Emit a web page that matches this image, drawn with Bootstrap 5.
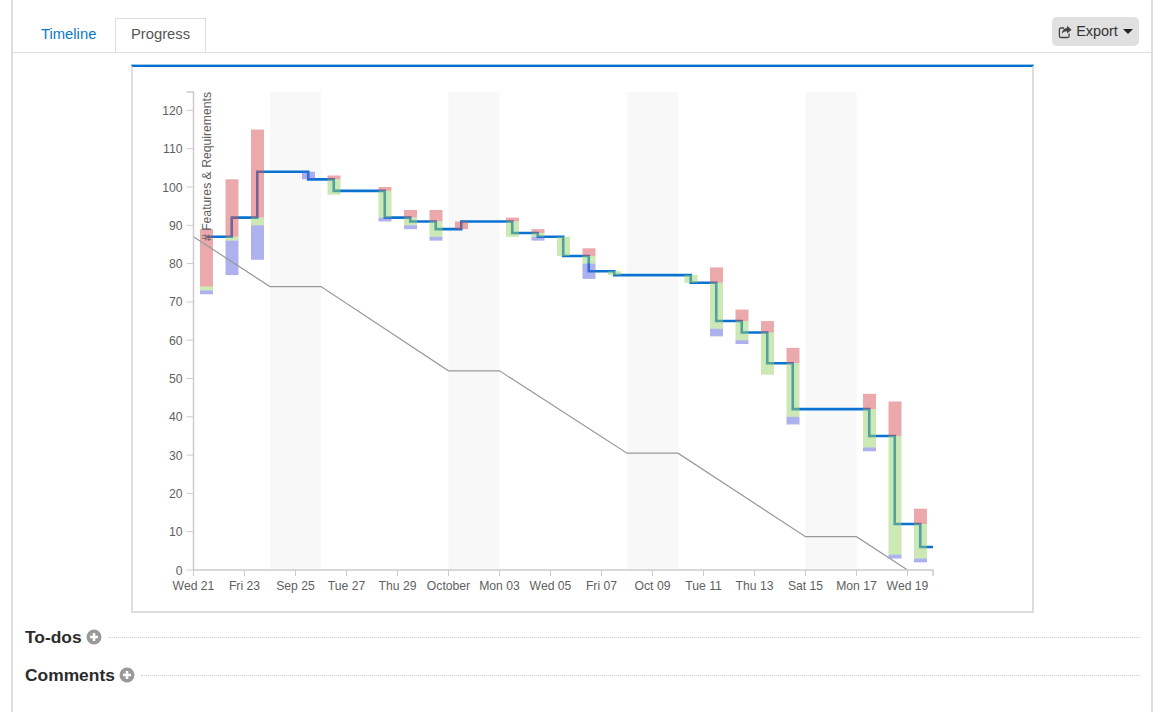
<!DOCTYPE html>
<html lang="en">
<head>
  <meta charset="UTF-8">
  <meta name="viewport" content="width=device-width, initial-scale=1">
  <title>Progress</title>
  <link href="https://cdn.jsdelivr.net/npm/bootstrap@5.3.0/dist/css/bootstrap.min.css" rel="stylesheet">
  <style>
    html, body { height: 100%; }
    body { font-family: "Liberation Sans", Arial, sans-serif; color: #333; background: #fff; overflow: hidden; }
    .panel-wrap { margin: 0 11px 0 11px; min-height: 100%; border-left: 2px solid #ddd; border-right: 2px solid #ddd; }
    .tab-head { padding-top: 18px; border-bottom: 1px solid #ddd; height: 53px; }
    .tab-head .nav-tabs { border-bottom: 0; padding-left: 12px; gap: 3px; }
    .tab-head .nav-link { font-size: 14.8px; line-height: 20px; padding: 5px 14.5px 7px 15px; height: 34px; color: #0a78c8; border-radius: 0; }
    .tab-head .nav-link.active { color: #555; border-color: #ddd #ddd #fff; border-width: 1.5px 1.5px 1px; margin-bottom: -1px; }
    .export-btn { margin: -1px 12px 0 0; width: 87px; height: 29px; padding: 0; font-size: 14.4px; color: #333; background: #e0e0e0; border: 0; border-radius: 5px; display: flex; align-items: center; justify-content: center; gap: 4px; }
    .export-btn .down-caret { width: 0; height: 0; border-left: 5px solid transparent; border-right: 5px solid transparent; border-top: 5px solid #222; margin-left: 1px; }
    .chart-frame { width: 903px; height: 548px; margin: 12px 0 0 118px; border: 2px solid #ddd; border-top-color: #0070d0; box-shadow: 0 -1px 0 rgba(0, 112, 208, .4); }
    .chart-frame svg { display: block; }
    .chart-frame text { font-family: "Liberation Sans", Arial, sans-serif; font-size: 12.2px; fill: #5f5f5f; }
    .sect-row { padding: 0 12px 0 12px; height: 38px; }
    .sect-title { font-size: 17.4px; font-weight: 700; color: #2b2b2b; margin: 0; line-height: 24px; }
    .sect-rule { border-top: 1px dotted #ccc; margin-left: 6px; }
    .first-sect { margin-top: 5px; }
  </style>
</head>
<body>
  <div class="panel-wrap">
    <div class="tab-head d-flex justify-content-between align-items-start">
      <ul class="nav nav-tabs">
        <li class="nav-item"><a class="nav-link" href="#">Timeline</a></li>
        <li class="nav-item"><a class="nav-link active" href="#">Progress</a></li>
      </ul>
      <button class="export-btn" type="button">
        <svg width="14" height="14" viewBox="0 0 14 14" aria-hidden="true">
          <path d="M6 3H3a1.6 1.6 0 0 0-1.6 1.6v6.3A1.6 1.6 0 0 0 3 12.500h6.500a1.600 1.600 0 0 0 1.600-1.600V8.500" fill="none" stroke="#444" stroke-width="1.300"/>
          <path d="M9 .8l4.600 3.900L9 8.600V6.300C6.800 6.300 5 7 4 9c0-3.300 1.900-5.700 5-5.900z" fill="#444"/>
        </svg>
        <span>Export</span>
        <span class="down-caret"></span>
      </button>
    </div>

    <div class="chart-frame">
      <svg id="chart" width="899" height="544"></svg>
    </div>

    <div class="sect-row first-sect d-flex align-items-center">
      <h5 class="sect-title">To-dos</h5>
      <svg class="ms-1" width="16" height="16" viewBox="0 0 16 16"><circle cx="8" cy="8" r="7.500" fill="#999"/><path d="M8 4v8M4 8h8" stroke="#fff" stroke-width="2.600"/></svg>
      <div class="sect-rule flex-grow-1"></div>
    </div>
    <div class="sect-row d-flex align-items-center">
      <h5 class="sect-title">Comments</h5>
      <svg class="ms-1" width="16" height="16" viewBox="0 0 16 16"><circle cx="8" cy="8" r="7.500" fill="#999"/><path d="M8 4v8M4 8h8" stroke="#fff" stroke-width="2.600"/></svg>
      <div class="sect-rule flex-grow-1"></div>
    </div>
  </div>

  <script>
    document.addEventListener("DOMContentLoaded", () => {
      const svg = document.getElementById("chart");
      // svg origin sits at the inside of the frame
      const ox = -133, oy = -67;
      const X = i => 193.5 + 25.5 * i + ox;
      const Y = v => 570 - 3.83 * v + oy;

      const add = (tag, attrs, text) => {
        const el = document.createElementNS("http://www.w3.org/2000/svg", tag);
        Object.keys(attrs).forEach(k => el.setAttribute(k, attrs[k]));
        if (text) el.textContent = text;
        svg.appendChild(el);
        return el;
      };

      // weekends
      [3, 10, 17, 24].forEach(i => {
        add("rect", { x: X(i), y: 92 + oy, width: 51, height: 478, fill: "#f8f8f8" });
      });

      // remaining work, stepped at mid-day
      const steps = [[0.5, 87], [1.5, 92], [2.5, 104], [4.5, 102], [5.5, 99], [7.5, 92], [8.5, 91], [9.5, 89], [10.5, 91],
        [12.5, 88], [13.5, 87], [14.5, 82], [15.5, 78], [16.5, 77], [19.5, 75], [20.5, 65], [21.5, 62], [22.5, 54],
        [23.5, 42], [26.5, 35], [27.5, 12], [28.5, 6]];
      let d = "";
      steps.forEach((s, n) => {
        d += (n ? "H" + X(s[0]) + "V" : "M" + X(s[0]) + " ") + Y(s[1]);
      });
      d += "H" + X(29);
      add("path", { d: d, fill: "none", stroke: "#0a72d0", "stroke-width": 2.600 });

      // day, red top, green top, blue top, blue bottom
      const bars = [[0, 89, 74, 73, 72], [1, 102, 87, 86, 77], [2, 115, 92, 90, 81], [4, 104, 104, 104, 102], [5, 103, 102, 98, 98],
        [7, 100, 99, 92, 91], [8, 94, 92, 90, 89], [9, 94, 91, 87, 86], [10, 91, 89, 89, 89], [12, 92, 91, 87, 87],
        [13, 89, 88, 87, 86], [14, 87, 87, 82, 82], [15, 84, 82, 80, 76], [16, 78, 78, 77, 77], [19, 77, 77, 75, 75],
        [20, 79, 75, 63, 61], [21, 68, 65, 60, 59], [22, 65, 62, 51, 51], [23, 58, 54, 40, 38], [26, 46, 42, 32, 31],
        [27, 44, 35, 4, 3], [28, 16, 12, 3, 2]];
      const colors = ["#d95357", "#97d16b", "#5b65dd"];
      bars.forEach(b => {
        for (let c = 0; c < 3; c++) {
          if (b[c + 1] > b[c + 2]) {
            add("rect", { x: X(b[0]) + 6.5, y: Y(b[c + 1]), width: 13, height: Y(b[c + 2]) - Y(b[c + 1]), fill: colors[c], opacity: 0.5 });
          }
        }
      });

      // ideal burndown
      const ideal = [[0, 87], [3, 74], [5, 74], [10, 52], [12, 52], [17, 30.500], [19, 30.500], [24, 8.700], [26, 8.700], [28, 0]];
      add("polyline", { points: ideal.map(p => X(p[0]) + "," + Y(p[1])).join(" "), fill: "none", stroke: "#999", "stroke-width": 1.200 });

      // axes
      const axis = "#ccc";
      add("path", { d: `M${X(0) - 7} ${92 + oy}H${X(0)}V${Y(0)}H${X(29)}V${Y(0) + 6}`, fill: "none", stroke: axis, "stroke-width": 1.500 });
      for (let v = 0; v <= 120; v += 10) {
        add("line", { x1: X(0) - 7, x2: X(0), y1: Y(v), y2: Y(v), stroke: axis, "stroke-width": 1 });
        add("text", { x: X(0) - 11, y: Y(v) + 4.500, "text-anchor": "end" }, String(v));
      }
      const labels = ["Wed 21", "Fri 23", "Sep 25", "Tue 27", "Thu 29", "October", "Mon 03", "Wed 05", "Fri 07", "Oct 09", "Tue 11", "Thu 13", "Sat 15", "Mon 17", "Wed 19"];
      labels.forEach((t, n) => {
        add("line", { x1: X(n * 2), x2: X(n * 2), y1: Y(0), y2: Y(0) + 6, stroke: axis, "stroke-width": 1 });
        add("text", { x: X(n * 2), y: Y(0) + 20, "text-anchor": "middle" }, t);
      });
      add("text", { transform: `translate(${211 + ox} ${92 + oy}) rotate(-90)`, "text-anchor": "end" }, "# Features & Requirements");
    });
  </script>

  <script src="https://cdn.jsdelivr.net/npm/bootstrap@5.3.0/dist/js/bootstrap.bundle.min.js"></script>
</body>
</html>
